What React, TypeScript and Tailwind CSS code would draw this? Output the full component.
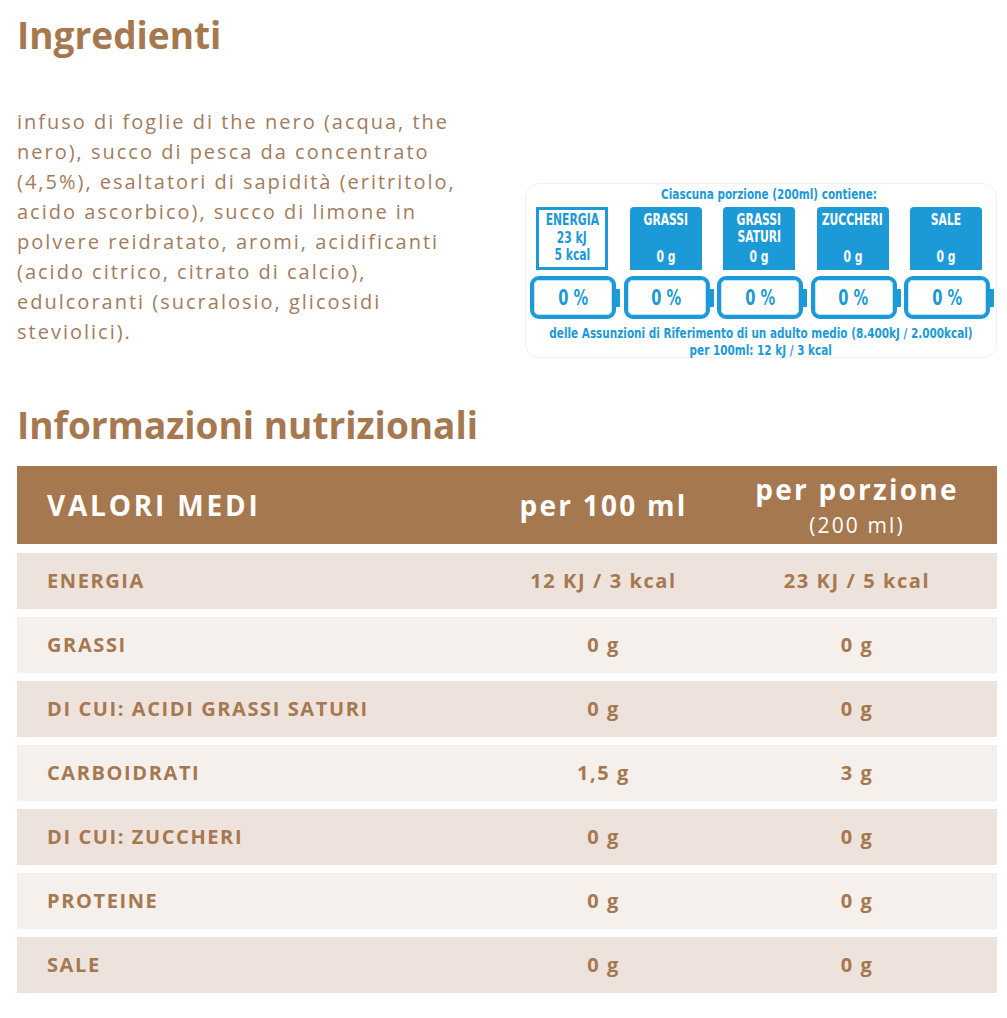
import type { ReactNode } from 'react'

interface NutrientRow {
  label: string
  per100: string
  perPortion: string
}

const ROWS: NutrientRow[] = [
  { label: 'ENERGIA', per100: '12 KJ / 3 kcal', perPortion: '23 KJ / 5 kcal' },
  { label: 'GRASSI', per100: '0 g', perPortion: '0 g' },
  { label: 'DI CUI: ACIDI GRASSI SATURI', per100: '0 g', perPortion: '0 g' },
  { label: 'CARBOIDRATI', per100: '1,5 g', perPortion: '3 g' },
  { label: 'DI CUI: ZUCCHERI', per100: '0 g', perPortion: '0 g' },
  { label: 'PROTEINE', per100: '0 g', perPortion: '0 g' },
  { label: 'SALE', per100: '0 g', perPortion: '0 g' },
]

const LABEL_COLUMNS = [
  { name: ['GRASSI'], value: '0 g' },
  { name: ['GRASSI', 'SATURI'], value: '0 g' },
  { name: ['ZUCCHERI'], value: '0 g' },
  { name: ['SALE'], value: '0 g' },
]

// the label uses a condensed face; squeeze DejaVu Condensed horizontally
function Narrow({ children }: { children: ReactNode }) {
  return <span className="inline-block scale-x-[0.8] whitespace-nowrap">{children}</span>
}

function Battery({ children }: { children: ReactNode }) {
  return (
    <div className="flex items-center">
      <div className="h-[43px] w-[86px] rounded-[9px] border-[4px] border-[#1b9ad7] bg-white">
        <div className="flex h-full w-full items-center justify-center rounded-[5px] border border-[#bfe2f5] text-[22px] leading-none">
          <span className="inline-block scale-x-[0.74] whitespace-nowrap">{children}</span>
        </div>
      </div>
      <div className="h-[18px] w-[4px] rounded-r-[1px] bg-[#1b9ad7]" />
    </div>
  )
}

function TrafficLabel() {
  return (
    <div className="mt-[126px] h-[175px] w-[472px] shrink-0 rounded-[14px] border border-[#f1f1f1] bg-white pt-px font-['DejaVu_Sans_Condensed',sans-serif] font-bold text-[#1b9ad7]">
      <p className="flex justify-center pl-4 text-[14px] leading-[18px]">
        <span className="inline-block scale-x-[0.83] whitespace-nowrap">Ciascuna porzione (200ml) contiene:</span>
      </p>
      <div className="mt-1 flex gap-[3.5px] pl-[4px]">
        <div className="flex w-[90px] flex-col gap-[6px]">
          <div className="ml-[6px] flex h-[63px] w-[72px] flex-col items-center justify-center border-[3px] border-[#1b9ad7] text-[15px] leading-[17.5px]">
            <Narrow>ENERGIA</Narrow>
            <Narrow>23 kJ</Narrow>
            <Narrow>5 kcal</Narrow>
          </div>
          <Battery>0 %</Battery>
        </div>
        {LABEL_COLUMNS.map((col, i) => (
          <div key={i} className="flex w-[90px] flex-col gap-[6px]">
            <div className="ml-[6px] flex h-[63px] w-[72px] flex-col items-center justify-between rounded-t-[4px] bg-[#1b9ad7] pt-[5px] pb-[4px] text-[15px] leading-[17px] text-white">
              <div className="flex flex-col items-center">
                {col.name.map((n) => (
                  <Narrow key={n}>{n}</Narrow>
                ))}
              </div>
              <Narrow>{col.value}</Narrow>
            </div>
            <Battery>0 %</Battery>
          </div>
        ))}
      </div>
      <p className="mt-[6px] flex justify-center text-[14px] leading-[17px]">
        <span className="inline-block scale-x-[0.83] whitespace-nowrap">
          delle Assunzioni di Riferimento di un adulto medio (8.400kJ / 2.000kcal)
        </span>
      </p>
      <p className="flex justify-center text-[14px] leading-[17px]">
        <span className="inline-block scale-x-[0.83] whitespace-nowrap">per 100ml: 12 kJ / 3 kcal</span>
      </p>
    </div>
  )
}

export default function App() {
  return (
    <div className="min-h-[1018px] w-[1007px] bg-white pl-[17px] font-['Open_Sans',sans-serif] text-[#a67850]">
      <h2 className="pt-[13px] text-[37px] font-bold leading-[44px]">Ingredienti</h2>

      <div className="flex justify-between pr-[10px]">
        <p className="mt-[50px] w-[470px] text-[20px] leading-[30px] tracking-[0.1em] text-[#a27c5c]">
          infuso di foglie di the nero (acqua, the
          <br />
          nero), succo di pesca da concentrato
          <br />
          (4,5%), esaltatori di sapidità (eritritolo,
          <br />
          acido ascorbico), succo di limone in
          <br />
          polvere reidratato, aromi, acidificanti
          <br />
          (acido citrico, citrato di calcio),
          <br />
          edulcoranti (sucralosio, glicosidi
          <br />
          steviolici).
        </p>
        <TrafficLabel />
      </div>

      <h2 className="mt-[45px] text-[37px] font-bold leading-[44px]">Informazioni nutrizionali</h2>

      <div className="mt-[19px] w-[980px]">
        <div className="flex h-[78px] bg-[#a67850] text-white">
          <div className="flex w-[460px] items-center pl-[30px] text-[28px] font-bold tracking-[0.1em]">
            VALORI MEDI
          </div>
          <div className="flex w-[253px] items-center justify-center text-[28px] font-bold tracking-[0.08em]">
            per 100 ml
          </div>
          <div className="flex w-[254px] flex-col items-center justify-center pt-[4px]">
            <span className="text-[28px] font-bold leading-[37px] tracking-[0.08em]">per porzione</span>
            <span className="text-[21px] leading-[35px] tracking-[0.1em]">(200 ml)</span>
          </div>
        </div>

        <div className="mt-[9px] flex flex-col gap-[8px]">
          {ROWS.map((row, i) => (
            <div
              key={row.label}
              className={`flex h-[56px] items-center text-[20px] font-bold tracking-[0.08em] ${
                i % 2 === 0 ? 'bg-[#ede3dc]' : 'bg-[#f5f0ec]'
              }`}
            >
              <div className="w-[460px] pl-[30px]">{row.label}</div>
              <div className="w-[253px] text-center">{row.per100}</div>
              <div className="w-[254px] text-center">{row.perPortion}</div>
            </div>
          ))}
        </div>
      </div>
    </div>
  )
}
